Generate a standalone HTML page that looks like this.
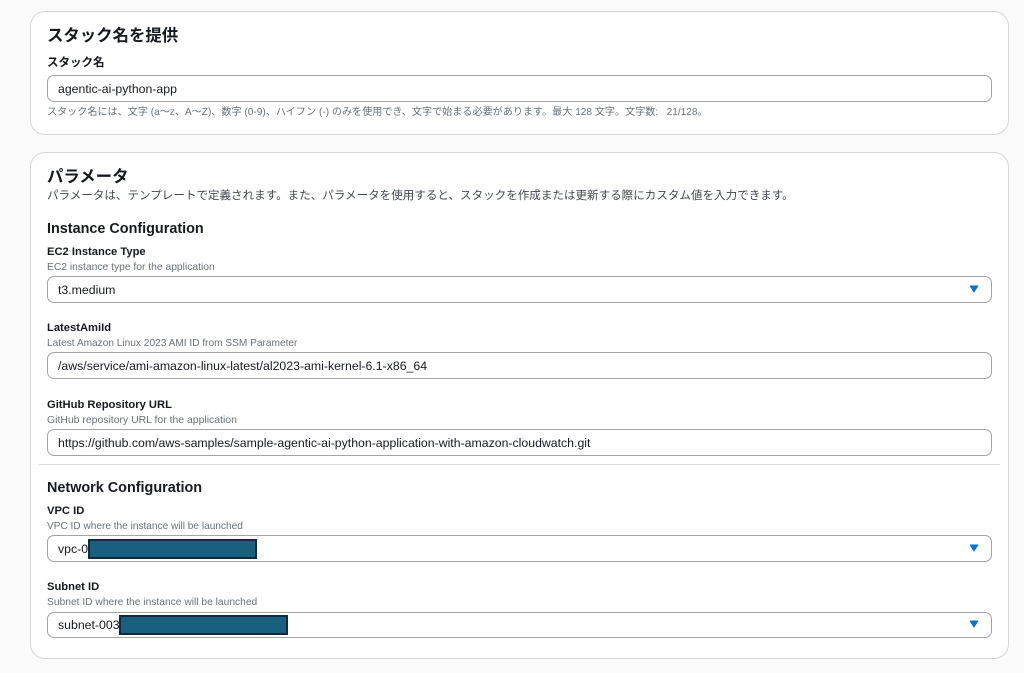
<!DOCTYPE html>
<html lang="ja">
<head>
<meta charset="utf-8">
<title>スタック</title>
<style>
html,body{margin:0;padding:0;}
body{width:1024px;height:673px;background:#fafafa;position:relative;overflow:hidden;font-family:"Liberation Sans","Noto Sans CJK JP",sans-serif;color:#16191f;}
#w{position:absolute;left:0;top:0;width:1024px;height:673px;filter:blur(0.3px);}
.card{position:absolute;left:30px;width:977px;background:#fff;border:1px solid #d6d6d6;border-radius:15px;}
.t{position:absolute;white-space:nowrap;line-height:1;}
.h1{font-size:16.4px;font-weight:700;left:47px;color:#16191f;}
.h2{font-size:14.4px;font-weight:700;left:47px;color:#16191f;}
.lb{font-size:11.2px;font-weight:700;left:47px;color:#16191f;}
.ds{font-size:10.2px;left:47px;color:#687078;}
.v{font-size:12.3px;left:58px;color:#16191f;}
.inp{position:absolute;left:47px;width:942.5px;height:24.5px;background:#fff;border:1px solid #a4a4a4;border-radius:7px;}
.arr{position:absolute;left:969px;width:10px;height:8px;}
.red{position:absolute;background:#19607f;border:2px solid #0f2b3d;box-sizing:border-box;}
</style>
</head>
<body>
<div id="w">
<div class="card" style="top:11px;height:122px;"></div>
<div class="card" style="top:152px;height:505px;"></div>

<div class="t h1" style="top:27.5px;">スタック名を提供</div>
<div class="t lb" style="top:58px;font-size:11.5px;">スタック名</div>
<div class="inp" style="top:75px;"></div>
<div class="t v" style="top:82.5px;">agentic-ai-python-app</div>
<div class="t ds" style="top:107.5px;font-size:10.1px;">スタック名には、文字 (a～z、A～Z)、数字 (0-9)、ハイフン (-) のみを使用でき、文字で始まる必要があります。最大 128 文字。文字数:&nbsp;&nbsp; 21/128。</div>

<div class="t h1" style="top:168.5px;">パラメータ</div>
<div class="t" style="top:190.5px;left:47px;font-size:11.55px;color:#414750;">パラメータは、テンプレートで定義されます。また、パラメータを使用すると、スタックを作成または更新する際にカスタム値を入力できます。</div>

<div class="t h2" style="top:221.5px;">Instance Configuration</div>
<div class="t lb" style="top:247px;">EC2 Instance Type</div>
<div class="t ds" style="top:263px;font-size:10.3px;">EC2 instance type for the application</div>
<div class="inp" style="top:276px;"></div>
<div class="t v" style="top:284px;">t3.medium</div>
<svg class="arr" style="top:285px;" viewBox="0 0 10 8"><path d="M1.2 1H8.8L5 7Z" fill="#0972d3" stroke="#0972d3" stroke-width="1" stroke-linejoin="round"/></svg>

<div class="t lb" style="top:323px;">LatestAmiId</div>
<div class="t ds" style="top:339px;font-size:10.15px;">Latest Amazon Linux 2023 AMI ID from SSM Parameter</div>
<div class="inp" style="top:352px;"></div>
<div class="t v" style="top:360px;">/aws/service/ami-amazon-linux-latest/al2023-ami-kernel-6.1-x86_64</div>

<div class="t lb" style="top:399.5px;">GitHub Repository URL</div>
<div class="t ds" style="top:416px;font-size:10.45px;">GitHub repository URL for the application</div>
<div class="inp" style="top:429px;"></div>
<div class="t v" style="top:437px;">https://github.com/aws-samples/sample-agentic-ai-python-application-with-amazon-cloudwatch.git</div>

<div style="position:absolute;left:39px;top:464px;width:961px;height:1px;background:#dcdcdc;"></div>

<div class="t h2" style="top:480.5px;">Network Configuration</div>
<div class="t lb" style="top:505.5px;">VPC ID</div>
<div class="t ds" style="top:521.5px;font-size:10.1px;">VPC ID where the instance will be launched</div>
<div class="inp" style="top:535px;"></div>
<div class="t v" style="top:543px;">vpc-0</div>
<div class="red" style="left:88px;top:539px;width:169px;height:20px;"></div>
<svg class="arr" style="top:544px;" viewBox="0 0 10 8"><path d="M1.2 1H8.8L5 7Z" fill="#0972d3" stroke="#0972d3" stroke-width="1" stroke-linejoin="round"/></svg>

<div class="t lb" style="top:582px;">Subnet ID</div>
<div class="t ds" style="top:598px;font-size:10.25px;">Subnet ID where the instance will be launched</div>
<div class="inp" style="top:611.5px;"></div>
<div class="t v" style="top:619px;">subnet-003</div>
<div class="red" style="left:119px;top:615px;width:169px;height:20px;"></div>
<svg class="arr" style="top:620px;" viewBox="0 0 10 8"><path d="M1.2 1H8.8L5 7Z" fill="#0972d3" stroke="#0972d3" stroke-width="1" stroke-linejoin="round"/></svg>
</div>
</body>
</html>
